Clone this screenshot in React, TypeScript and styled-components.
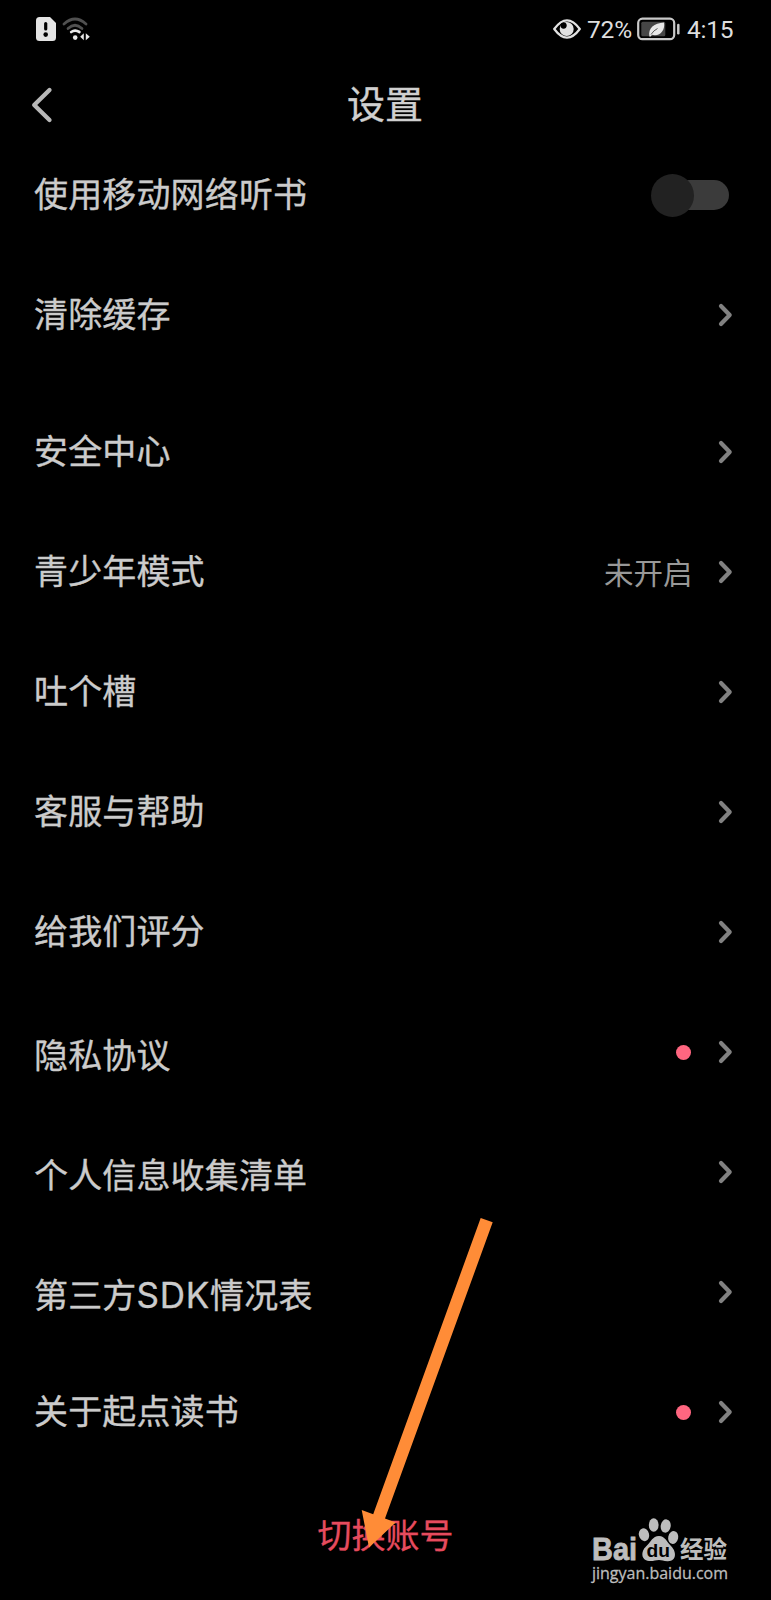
import React from 'react';
import styled, { createGlobalStyle } from 'styled-components';

const GlobalStyle = createGlobalStyle`
  * { box-sizing: border-box; }
  body {
    margin: 0;
    background: #000;
    font-family: Roboto, 'Noto Sans CJK SC', sans-serif;
  }
`;

const Screen = styled.main`
  position: relative;
  display: flex;
  flex-direction: column;
  width: 771px;
  height: 1600px;
  overflow: hidden;
  background: #000;
  color: #cbcbcb;
  font-family: 'Noto Sans CJK SC', sans-serif;
`;

const StatusBar = styled.div`
  display: flex;
  align-items: center;
  justify-content: space-between;
  height: 58px;
  padding: 0 37px 0 36px;
`;

const StatusGroup = styled.div<{ $gap: number }>`
  display: flex;
  align-items: center;
  gap: ${(p) => p.$gap}px;
`;

const StatusText = styled.span<{ $width: number }>`
  width: ${(p) => p.$width}px;
  padding-top: 2px;
  color: #dedede;
  font: 400 24.5px/30px Roboto, sans-serif;
  letter-spacing: -0.2px;
  white-space: nowrap;
`;

const Header = styled.header`
  display: grid;
  grid-template-columns: 60px 1fr 60px;
  align-items: start;
  height: 77px;
  padding: 0 16px 0 15px;
`;

const BackButton = styled.button`
  display: flex;
  padding: 28px 15px 0;
  border: 0;
  background: none;
`;

const Title = styled.h1`
  margin: 0;
  padding-top: 12px;
  text-align: center;
  color: #d0d0d0;
  font-size: 38px;
  line-height: 64px;
  font-weight: 400;
  -webkit-text-stroke: 0.35px currentColor;
`;

const Group = styled.section<{ $top?: number }>`
  margin-top: ${(p) => p.$top ?? 0}px;
`;

const Row = styled.div`
  display: flex;
  align-items: center;
  justify-content: space-between;
  height: 120px;
  padding: 0 38.5px 0 34px;
`;

const Label = styled.span<{ $drop?: number }>`
  padding-top: ${(p) => (p.$drop ?? 0) * 2}px;
  padding-bottom: 4px;
  font-size: 34px;
  line-height: 50px;
  letter-spacing: 0.15px;
  white-space: nowrap;
  -webkit-text-stroke: 0.35px currentColor;
`;

const Latin = styled.span`
  font-family: Inter, sans-serif;
  font-size: 35px;
  line-height: 1;
  letter-spacing: 0.8px;
`;

const Trailing = styled.div`
  display: flex;
  align-items: center;
`;

const Value = styled.span`
  margin-right: 25px;
  padding-bottom: 3px;
  color: #989898;
  font-size: 29.5px;
  line-height: 44px;
`;

const Dot = styled.i`
  width: 15px;
  height: 15px;
  margin-right: 27px;
  border-radius: 50%;
  background: #ff6680;
`;

const Track = styled.div`
  display: flex;
  align-items: center;
  width: 74px;
  height: 30px;
  margin-right: 4px;
  border-radius: 15px;
  background: #3b3b3b;
`;

const Knob = styled.div`
  flex: none;
  width: 43px;
  height: 43px;
  margin-left: -3.5px;
  border-radius: 50%;
  background: #222;
`;

const SwitchAccount = styled.button`
  align-self: center;
  margin: 37px 0 0;
  padding: 0;
  border: 0;
  background: none;
  color: #e64b5e;
  font: 400 34px/50px 'Noto Sans CJK SC', sans-serif;
  -webkit-text-stroke: 0.3px currentColor;
`;

const Pointer = styled.svg`
  position: absolute;
  left: 355px;
  top: 1210px;
`;

const Watermark = styled.div`
  position: absolute;
  left: 590px;
  top: 1514px;
  width: 145px;
  color: #bdbdbd;
`;

const Chevron = () => (
  <svg width="15" height="24" viewBox="0 0 15 24" fill="none" stroke="#818181" strokeWidth="4.2" strokeLinecap="round" strokeLinejoin="round">
    <path d="M3 3L11.7 12L3 21" />
  </svg>
);

const SimIcon = () => (
  <svg width="20" height="24" viewBox="0 0 20 24">
    <path fill="#e4e4e4" d="M3.5 0H14L20 6V20.5Q20 24 16.5 24H3.5Q0 24 0 20.5V3.5Q0 0 3.5 0Z" />
    <path stroke="#000" strokeWidth="3.2" strokeLinecap="round" d="M9.7 6.5V12" />
    <circle cx="9.7" cy="17.6" r="2.3" />
  </svg>
);

const WifiIcon = () => (
  <svg width="28" height="24" viewBox="0 0 28 24" fill="none" strokeWidth="2.7" strokeLinecap="round">
    <path stroke="#505050" d="M2 7Q13 -3 24 7" />
    <path stroke="#505050" d="M6 11.5Q13 5 20 11.5" />
    <path stroke="#e8e8e8" d="M9.2 15Q13 12.4 17.4 15" />
    <circle cx="13.2" cy="20.6" r="2.3" fill="#e8e8e8" />
    <path fill="#e8e8e8" d="M18.2 19.8L21.8 16.3V23.3ZM27.8 19.8L23.8 16.3V23.3Z" />
  </svg>
);

const EyeIcon = () => (
  <svg width="28" height="20" viewBox="0 0 28 20" fill="none">
    <path stroke="#e2e2e2" strokeWidth="2.2" strokeLinejoin="round" d="M1.2 10Q14 -7.2 26.8 10Q14 27.2 1.2 10Z" />
    <circle cx="13.7" cy="10" r="7" fill="#e2e2e2" />
    <circle cx="10.6" cy="6.6" r="3.1" fill="#000" />
  </svg>
);

const BatteryIcon = () => (
  <svg width="44" height="24" viewBox="0 0 44 24" fill="none">
    <rect x="1.2" y="1.7" width="36" height="20.5" rx="4.2" stroke="#c9c9c9" strokeWidth="2.2" />
    <rect x="4.3" y="4.8" width="24" height="14.4" rx="1.5" fill="#464646" />
    <path fill="#e8e8e8" d="M12.4 19.5C11 11 17 6.2 27 5.5C28.4 13 23 20 15 17.8L13.7 19.4Z" />
    <path stroke="#5a5a5a" strokeWidth="1" d="M14 17.5Q16.5 13.5 20.5 11.5" />
    <path stroke="#c9c9c9" strokeWidth="2.5" strokeLinecap="round" d="M41.3 8V16.3" />
  </svg>
);

const BaiduLogo = () => (
  <svg width="145" height="72" viewBox="0 0 145 72" fill="currentColor">
    <text x="2" y="46" textLength="45" lengthAdjust="spacingAndGlyphs" fontFamily="Liberation Sans" fontWeight="700" fontSize="31" stroke="currentColor" strokeWidth="0.8">Bai</text>
    <ellipse cx="54" cy="20.7" rx="5.1" ry="6.5" transform="rotate(-15 54 20.7)" />
    <ellipse cx="63.7" cy="11" rx="4.9" ry="6.7" />
    <ellipse cx="75.7" cy="12" rx="5" ry="6.7" transform="rotate(9 75.7 12)" />
    <ellipse cx="83.2" cy="23.5" rx="5" ry="6.5" transform="rotate(12 83.2 23.5)" />
    <path d="M69 22C75 22 77 28 81.2 32.3C86.5 37.5 87 47 78 47.2C73.5 47.3 72 46 69 46C65.5 46 63 47.5 59 47C50.5 46 51 37 56 32.5C61 28 62.5 22 69 22Z" />
    <text x="56.5" y="43.3" textLength="23.5" lengthAdjust="spacingAndGlyphs" fill="#000" fontFamily="Liberation Sans" fontWeight="700" fontSize="19">du</text>
    <text x="90" y="44" textLength="47" lengthAdjust="spacingAndGlyphs" fontFamily="Noto Sans CJK SC" fontWeight="700" fontSize="24">经验</text>
    <text x="2" y="64.5" textLength="136" lengthAdjust="spacingAndGlyphs" fontFamily="Open Sans" fontSize="16.5" stroke="currentColor" strokeWidth="0.3">jingyan.baidu.com</text>
  </svg>
);

type Item = { label: React.ReactNode; value?: string; dot?: boolean; drop?: number };

const SettingRow = ({ label, value, dot, drop }: Item) => (
  <Row>
    <Label $drop={drop}>{label}</Label>
    <Trailing>
      {value && <Value>{value}</Value>}
      {dot && <Dot />}
      <Chevron />
    </Trailing>
  </Row>
);

const items: Item[] = [
  { label: '安全中心' },
  { label: '青少年模式', value: '未开启' },
  { label: '吐个槽' },
  { label: '客服与帮助' },
  { label: '给我们评分' },
  { label: '隐私协议', dot: true, drop: 4 },
  { label: '个人信息收集清单', drop: 4 },
  { label: <>第三方<Latin>SDK</Latin>情况表</>, drop: 4 },
  { label: '关于起点读书', dot: true },
];

export default function App() {
  return (
    <Screen>
      <GlobalStyle />
      <StatusBar>
        <StatusGroup $gap={6}>
          <SimIcon />
          <WifiIcon />
        </StatusGroup>
        <StatusGroup $gap={6}>
          <EyeIcon />
          <StatusText $width={44}>72%</StatusText>
          <BatteryIcon />
          <StatusText $width={47}>4:15</StatusText>
        </StatusGroup>
      </StatusBar>
      <Header>
        <BackButton aria-label="返回">
          <svg width="24" height="38" viewBox="0 0 24 38" fill="none" stroke="#b8b8b8" strokeWidth="4.3" strokeLinecap="round" strokeLinejoin="round">
            <path d="M19.5 4L4.2 19L19.5 34" />
          </svg>
        </BackButton>
        <Title>设置</Title>
      </Header>
      <Group>
        <Row>
          <Label>使用移动网络听书</Label>
          <Track role="switch" aria-checked={false}><Knob /></Track>
        </Row>
        <SettingRow label="清除缓存" />
      </Group>
      <Group $top={17}>
        {items.map((item, i) => <SettingRow key={i} {...item} />)}
      </Group>
      <SwitchAccount>切换账号</SwitchAccount>
      <Pointer width="150" height="345" viewBox="355 1210 150 345">
        <path fill="#ff8c37" d="M480.7 1218L492.7 1222.3L385 1518.5L395.7 1522.5L369 1547.5L361.7 1510L373.2 1514.3Z" />
      </Pointer>
      <Watermark><BaiduLogo /></Watermark>
    </Screen>
  );
}
